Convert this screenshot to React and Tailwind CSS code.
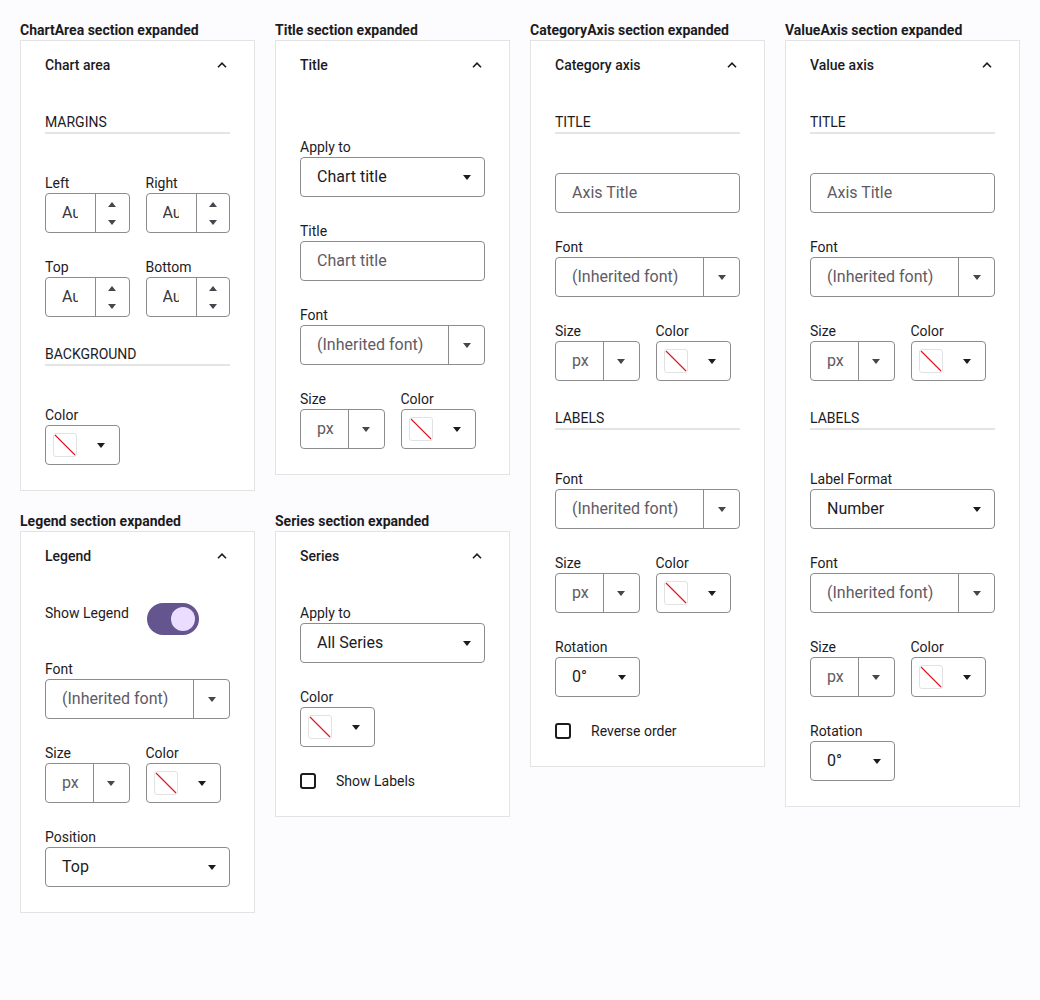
import React from 'react';

const Down = ({ className = 'fill-[#1c1b1f]' }) => (
  <svg width="8" height="5" viewBox="0 0 8 5" className={className}>
    <path d="M0 0h8L4 5z" />
  </svg>
);

const Up = ({ className = 'fill-[#49454f]' }) => (
  <svg width="8" height="5" viewBox="0 0 8 5" className={className}>
    <path d="M0 5h8L4 0z" />
  </svg>
);

const Chevron = () => (
  <span className="w-4 h-4 flex items-center justify-center">
    <svg width="10" height="6" viewBox="0 0 10 6" fill="none" stroke="#1c1b1f" strokeWidth="1.6">
      <path d="M1 5.2L5 1.2l4 4" />
    </svg>
  </span>
);

const Label = ({ children }) => <div className="text-sm leading-5 text-[#1c1b1f]">{children}</div>;

const Field = ({ label, children }) => (
  <div className="flex flex-col">
    <Label>{label}</Label>
    {children}
  </div>
);

const SectionTitle = ({ children, first }) => (
  <div className={`text-sm leading-5 text-[#1c1b1f] uppercase border-b-2 border-[#e4e4e4] mb-[15px] ${first ? '' : 'mt-[3px]'}`}>
    {children}
  </div>
);

// dropdown list: value + arrow
const Select = ({ value }) => (
  <div className="h-10 flex items-center justify-between pl-4 pr-[13px] border border-[#8c8c8c] rounded bg-white">
    <span className="text-base text-[#1c1b1f]">{value}</span>
    <Down />
  </div>
);

// combobox: value + separate arrow button
const Combo = ({ value }) => (
  <div className="h-10 flex border border-[#8c8c8c] rounded bg-white">
    <div className="flex-1 flex items-center pl-4 text-base text-[#5f5b63] whitespace-nowrap overflow-hidden">{value}</div>
    <div className="w-9 border-l border-[#8c8c8c] flex items-center justify-center">
      <Down className="fill-[#49454f]" />
    </div>
  </div>
);

const TextBox = ({ value }) => (
  <div className="h-10 flex items-center pl-4 border border-[#8c8c8c] rounded bg-white text-base text-[#5f5b63]">
    {value}
  </div>
);

const Spinner = () => (
  <div className="h-10 flex border border-[#8c8c8c] rounded bg-white">
    <div className="w-[49px] pl-4 pr-[17px] flex items-center">
      <div className="overflow-hidden whitespace-nowrap text-base text-[#3a373d]">Auto</div>
    </div>
    <div className="flex-1 border-l border-[#8c8c8c] flex flex-col items-center justify-center gap-[13px]">
      <Up />
      <Down className="fill-[#49454f]" />
    </div>
  </div>
);

const ColorPicker = () => (
  <div className="w-[75px] h-10 flex items-center justify-between pl-[7px] pr-[14px] border border-[#8c8c8c] rounded bg-white">
    <div className="w-6 h-6 border border-[#e2e2e2] rounded-[3px] bg-white">
      <svg width="22" height="22" viewBox="0 0 22 22">
        <path d="M1 1L21 21" stroke="#e0101e" strokeWidth="1.1" />
      </svg>
    </div>
    <Down />
  </div>
);

const Checkbox = ({ label }) => (
  <div className="flex items-center gap-5 h-5">
    <span className="w-4 h-4 border-2 border-[#1c1b1f] rounded-[3px] bg-white" />
    <span className="text-sm leading-5 text-[#1c1b1f]">{label}</span>
  </div>
);

const Panel = ({ heading, title, top = 'pt-6', children }) => (
  <div className="self-start flex flex-col">
    <div className="h-5 text-sm leading-5 font-bold text-[#1c1b1f]">{heading}</div>
    <div className="border border-[#e3e3e3] bg-white">
      <div className="h-[47px] px-6 flex items-center justify-between">
        <span className="text-sm font-medium text-[#1c1b1f]">{title}</span>
        <Chevron />
      </div>
      <div className={`px-6 pb-[25px] flex flex-col gap-6 ${top}`}>{children}</div>
    </div>
  </div>
);

const SizeColor = () => (
  <div className="grid grid-cols-2 gap-4">
    <Field label="Size">
      <Combo value="px" />
    </Field>
    <Field label="Color">
      <ColorPicker />
    </Field>
  </div>
);

export default function App() {
  return (
    <div className="min-h-[1000px] bg-[#fcfbfd] p-5 font-['Roboto','Liberation_Sans',sans-serif]">
      <div className="grid grid-cols-4 gap-5">
        {/* Chart area */}
        <Panel heading="ChartArea section expanded" title="Chart area">
          <SectionTitle first>Margins</SectionTitle>
          <div className="grid grid-cols-2 gap-4">
            <Field label="Left"><Spinner /></Field>
            <Field label="Right"><Spinner /></Field>
          </div>
          <div className="grid grid-cols-2 gap-4">
            <Field label="Top"><Spinner /></Field>
            <Field label="Bottom"><Spinner /></Field>
          </div>
          <SectionTitle>Background</SectionTitle>
          <Field label="Color"><ColorPicker /></Field>
        </Panel>

        {/* Title */}
        <Panel heading="Title section expanded" title="Title" top="pt-[49px]">
          <Field label="Apply to"><Select value="Chart title" /></Field>
          <Field label="Title"><TextBox value="Chart title" /></Field>
          <Field label="Font"><Combo value="(Inherited font)" /></Field>
          <SizeColor />
        </Panel>

        {/* Category axis */}
        <div className="row-span-2 self-start flex">
          <div className="w-full">
            <Panel heading="CategoryAxis section expanded" title="Category axis">
              <SectionTitle first>Title</SectionTitle>
              <TextBox value="Axis Title" />
              <Field label="Font"><Combo value="(Inherited font)" /></Field>
              <SizeColor />
              <SectionTitle>Labels</SectionTitle>
              <Field label="Font"><Combo value="(Inherited font)" /></Field>
              <SizeColor />
              <Field label="Rotation">
                <div className="w-[85px]"><Select value="0°" /></div>
              </Field>
              <Checkbox label="Reverse order" />
            </Panel>
          </div>
        </div>

        {/* Value axis */}
        <div className="row-span-2 self-start flex">
          <div className="w-full">
            <Panel heading="ValueAxis section expanded" title="Value axis">
              <SectionTitle first>Title</SectionTitle>
              <TextBox value="Axis Title" />
              <Field label="Font"><Combo value="(Inherited font)" /></Field>
              <SizeColor />
              <SectionTitle>Labels</SectionTitle>
              <Field label="Label Format"><Select value="Number" /></Field>
              <Field label="Font"><Combo value="(Inherited font)" /></Field>
              <SizeColor />
              <Field label="Rotation">
                <div className="w-[85px]"><Select value="0°" /></div>
              </Field>
            </Panel>
          </div>
        </div>

        {/* Legend */}
        <Panel heading="Legend section expanded" title="Legend">
          <div className="flex items-start gap-[18px]">
            <Label>Show Legend</Label>
            <div className="w-[52px] h-8 rounded-full bg-[#65558f] flex items-center justify-end pr-1">
              <span className="w-6 h-6 rounded-full bg-[#eaddff]" />
            </div>
          </div>
          <Field label="Font"><Combo value="(Inherited font)" /></Field>
          <SizeColor />
          <Field label="Position"><Select value="Top" /></Field>
        </Panel>

        {/* Series */}
        <Panel heading="Series section expanded" title="Series">
          <Field label="Apply to"><Select value="All Series" /></Field>
          <Field label="Color"><ColorPicker /></Field>
          <Checkbox label="Show Labels" />
        </Panel>
      </div>
    </div>
  );
}
